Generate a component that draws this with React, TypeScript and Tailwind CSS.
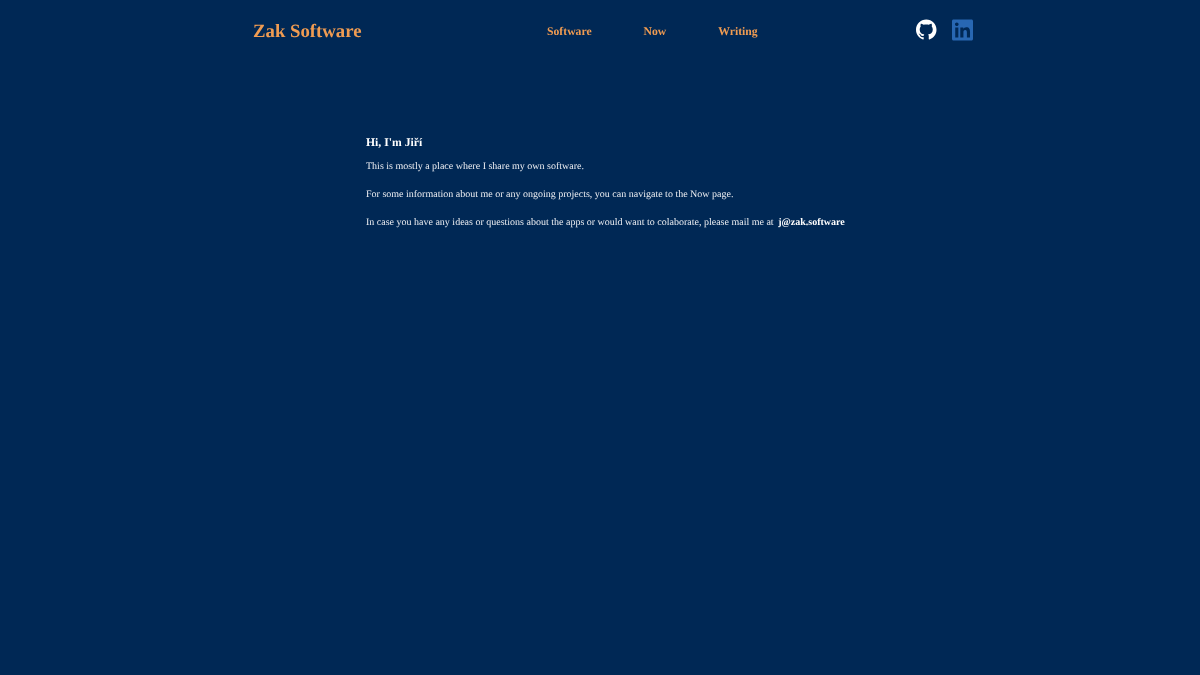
import { FaLinkedin } from "react-icons/fa";
import { SiGithub } from "react-icons/si";

const navLinks = ["Software", "Now", "Writing"];

export default function App() {
  return (
    <div className="min-h-screen bg-[#002855] font-['Liberation_Serif',serif] text-[#eceef2] [text-rendering:geometricPrecision]">
      {/* Header */}
      <header className="flex h-[61px] items-center pl-[253px] blur-[0.3px]">
        <a className="w-[294px] pt-[4px] text-[18.75px] font-bold text-[#f09c52]">Zak Software</a>
        <nav className="flex w-[369px] gap-[52px] pt-[2px] text-[11.7px] font-bold text-[#f09c52]">
          {navLinks.map((link) => (
            <a key={link}>{link}</a>
          ))}
        </nav>
        <div className="flex items-center gap-[15.5px] pb-[2px]">
          <SiGithub className="h-[21px] w-[20.5px] text-white" />
          <FaLinkedin className="h-[24px] w-[21px] text-[#2867b2]" />
        </div>
      </header>

      {/* Intro */}
      <main className="pl-[366px] pt-[74px] text-[10px] blur-[0.3px]">
        <h1 className="text-[11.7px] font-bold leading-[16px] text-white">Hi, I'm Jiří</h1>
        <p className="mt-[10px] leading-[12px]">This is mostly a place where I share my own software.</p>
        <p className="mt-[16px] leading-[12px]">For some information about me or any ongoing projects, you can navigate to the Now page.</p>
        <p className="mt-[16px] leading-[12px]">
          In case you have any ideas or questions about the apps or would want to colaborate, please mail me at{" "}
          <a className="ml-[2px] font-bold text-white">j@zak.software</a>
        </p>
      </main>
    </div>
  );
}
